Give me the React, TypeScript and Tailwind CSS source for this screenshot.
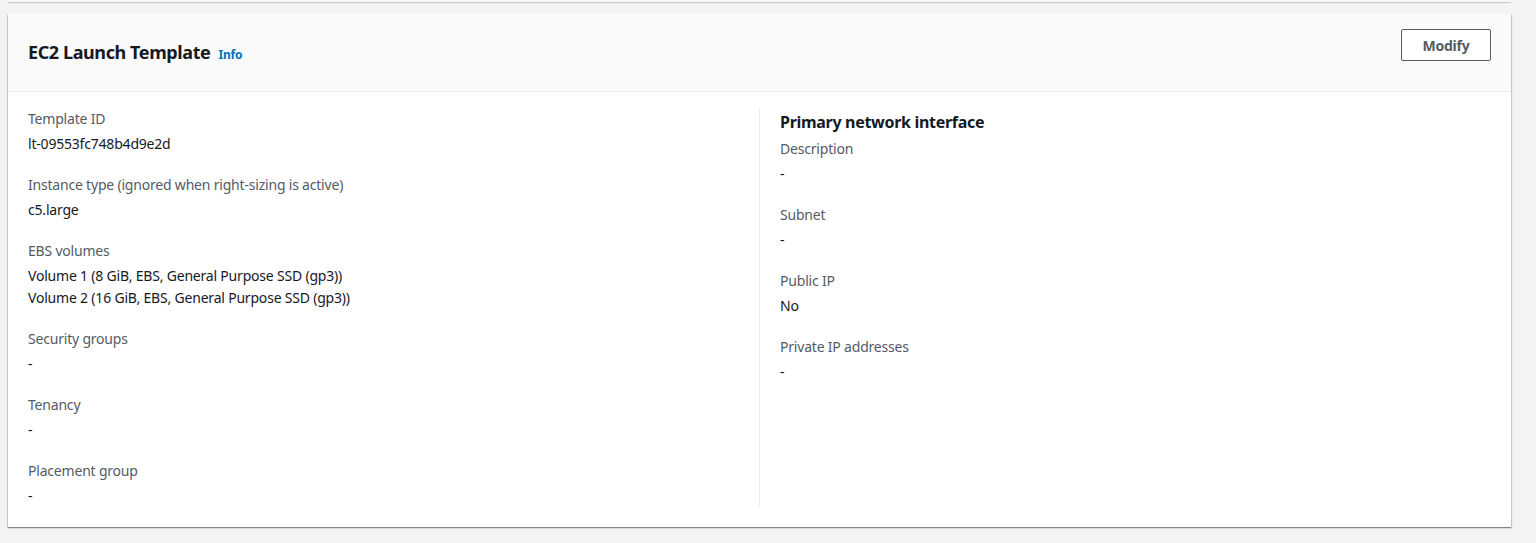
import React from "react";

const Field = ({ label, values }: { label: string; values: string[] }) => (
  <div className="mb-[19px] last:mb-0">
    <div className="text-[14px] leading-[22px] tracking-[-0.2px] text-[#545b64]">{label}</div>
    <div className="mt-[3px] text-[14px] leading-[22px] tracking-[-0.2px] text-[#16191f]">
      {values.map((v, i) => (
        <div key={i}>{v}</div>
      ))}
    </div>
  </div>
);

export default function App() {
  return (
    <div
      className="min-h-[543px] w-full bg-[#f2f3f3]"
      style={{ fontFamily: '"Noto Sans", "Open Sans", Arial, sans-serif' }}
    >
      <div className="ml-[8px] mr-[25px] h-[2px] bg-[#f7f7f7] shadow-[0_1px_1px_0_rgba(0,28,36,0.2)]" />
      <div className="ml-[8px] mr-[25px] mt-[12px] bg-white shadow-[0_1px_1px_0_rgba(0,28,36,0.3),1px_1px_1px_0_rgba(0,28,36,0.15),-1px_1px_1px_0_rgba(0,28,36,0.15)]">
        <div className="flex h-[78px] items-start justify-between border-b border-[#eaeded] bg-[#fafafa] pl-[20px] pr-[20px]">
          <div className="mt-[25px] flex items-baseline gap-[8px]">
            <h2 className="text-[18px] font-bold leading-[26px] tracking-[-0.4px] text-[#16191f]">EC2 Launch Template</h2>
            <span className="text-[12px] font-bold tracking-[-0.2px] text-[#0073bb]">Info</span>
          </div>
          <button className="mt-[15px] h-[32px] w-[90px] rounded-[2px] border border-[#545b64] bg-white text-[14px] font-bold tracking-[-0.2px] text-[#545b64]">
            Modify
          </button>
        </div>
        <div className="flex px-[20px] pb-[20px] pt-[16px]">
          <div className="w-[732px] border-r border-[#eaeded]">
            <Field label="Template ID" values={["lt-09553fc748b4d9e2d"]} />
            <Field label="Instance type (ignored when right-sizing is active)" values={["c5.large"]} />
            <Field
              label="EBS volumes"
              values={[
                "Volume 1 (8 GiB, EBS, General Purpose SSD (gp3))",
                "Volume 2 (16 GiB, EBS, General Purpose SSD (gp3))",
              ]}
            />
            <Field label="Security groups" values={["-"]} />
            <Field label="Tenancy" values={["-"]} />
            <Field label="Placement group" values={["-"]} />
          </div>
          <div className="flex-1 pl-[20px]">
            <h3 className="mb-[2px] text-[16px] font-bold leading-[28px] tracking-[-0.3px] text-[#16191f]">Primary network interface</h3>
            <Field label="Description" values={["-"]} />
            <Field label="Subnet" values={["-"]} />
            <Field label="Public IP" values={["No"]} />
            <Field label="Private IP addresses" values={["-"]} />
          </div>
        </div>
      </div>
    </div>
  );
}
